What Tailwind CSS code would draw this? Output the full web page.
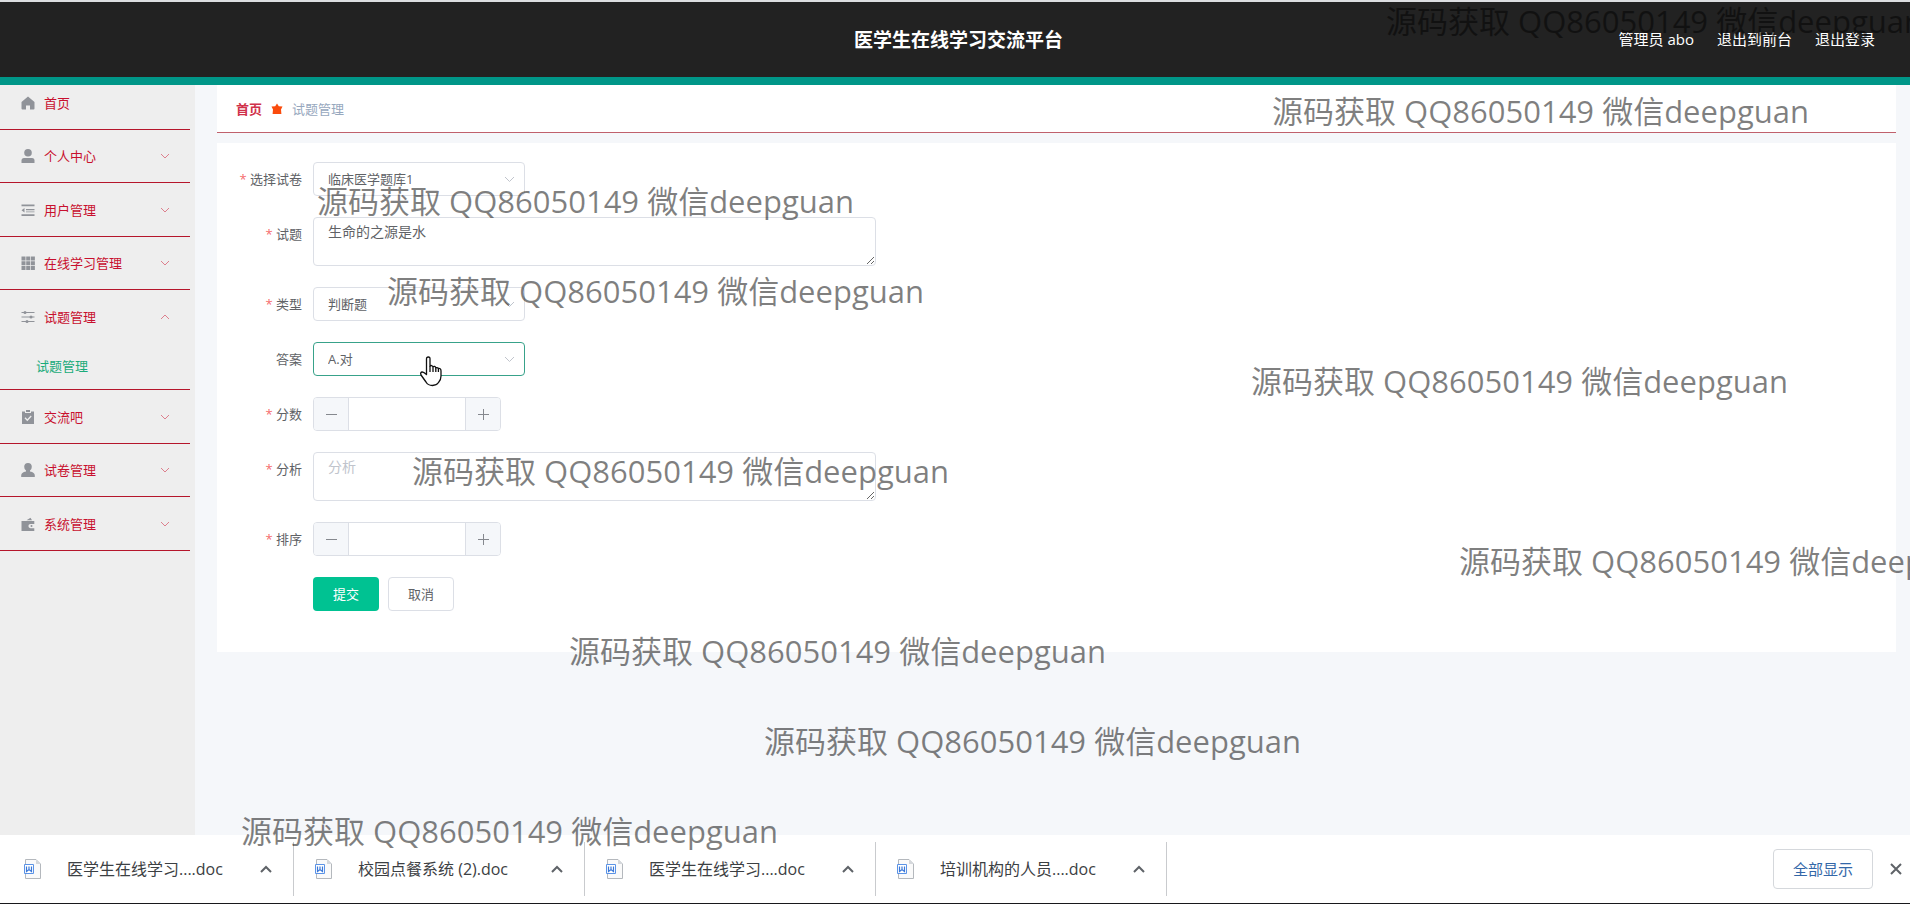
<!DOCTYPE html>
<html lang="zh-CN">
<head>
    <meta charset="UTF-8">
    <meta name="viewport" content="width=device-width, initial-scale=1.0">
    <title>医学生在线学习交流平台</title>
    <script src="https://cdn.jsdelivr.net/npm/@tailwindcss/browser@4"></script>
</head>

<body class="relative flex flex-col min-h-screen overflow-x-hidden bg-[#f5f7fa] text-[13px] leading-5 text-[#606266] font-['Open_Sans','Noto_Sans_CJK_SC',sans-serif]">
    <!-- Header -->
    <header class="grid grid-cols-[1fr_auto_1fr] items-center h-[85px] pl-[42px] pr-[35px] bg-[#222] text-white border-t-2 border-t-[#dcdee1] border-b-8 border-b-[#009688]">
        <span></span>
        <h1 class="text-[19px] leading-6 font-bold">医学生在线学习交流平台</h1>
        <nav class="flex justify-end gap-[23px] pb-px text-[15px]">
            <span>管理员 abo</span>
            <a href="#">退出到前台</a>
            <a href="#">退出登录</a>
        </nav>
    </header>

    <div class="flex flex-1">
        <!-- Sidebar -->
        <aside class="w-[195px] shrink-0 pr-[5px] bg-[#eee]">
            <ul class="text-[#c8102e]">
                <li class="h-[45px] pb-2 border-b border-[#b5152b]">
                    <a href="#" class="flex items-center h-full pl-[21px] pr-5">
                        <svg class="w-[14px] h-[14px] mr-[9px] text-[#909399]" viewBox="0 0 14 14" fill="currentColor"><path d="M7 0.5L0.5 6v6.5q0 1 1 1H5V9.5h4v4h3.500q1 0 1-1V6z"/></svg>
                        首页
                    </a>
                </li>
                <li class="h-[53px] border-b border-[#b5152b]">
                    <a href="#" class="flex items-center h-full pl-[21px] pr-5">
                        <svg class="w-[14px] h-[14px] mr-[9px] text-[#909399]" viewBox="0 0 14 14" fill="currentColor"><circle cx="7" cy="3.800" r="3.800"/><path d="M0.500 14v-2.500q0-2.500 2.500-2.500h8q2.500 0 2.500 2.500V14z"/></svg>
                        个人中心
                        <svg class="w-[10px] h-[6px] ml-auto text-[#dd7f8d]" viewBox="0 0 10 6" fill="none" stroke="currentColor"><path d="M1 1l4 4 4-4"/></svg>
                    </a>
                </li>
                <li class="h-[54px] border-b border-[#b5152b]">
                    <a href="#" class="flex items-center h-full pl-[21px] pr-5">
                        <svg class="w-[14px] h-[14px] mr-[9px] text-[#909399]" viewBox="0 0 14 14" fill="currentColor"><path d="M0.500 1.500h13v1.800h-13zM5 6h8.500v1.300H5zM5 8.500h8.500v.8H5zM0.500 11.200h13V13h-13zM0.500 7.200L3.500 5v4.400z"/></svg>
                        用户管理
                        <svg class="w-[10px] h-[6px] ml-auto text-[#dd7f8d]" viewBox="0 0 10 6" fill="none" stroke="currentColor"><path d="M1 1l4 4 4-4"/></svg>
                    </a>
                </li>
                <li class="h-[53px] border-b border-[#b5152b]">
                    <a href="#" class="flex items-center h-full pl-[21px] pr-5">
                        <svg class="w-[14px] h-[14px] mr-[9px] text-[#909399]" viewBox="0 0 14 14" fill="currentColor"><path d="M.5.5h4v4h-4zM5.200.5h4v4h-4zM9.900.5h4v4h-4zM.5 5.200h4v4h-4zM5.200 5.200h4v4h-4zM9.900 5.200h4v4h-4zM.5 9.900h4v4h-4zM5.200 9.900h4v4h-4zM9.900 9.900h4v4h-4z"/></svg>
                        在线学习管理
                        <svg class="w-[10px] h-[6px] ml-auto text-[#dd7f8d]" viewBox="0 0 10 6" fill="none" stroke="currentColor"><path d="M1 1l4 4 4-4"/></svg>
                    </a>
                </li>
                <li class="border-b border-[#b5152b]">
                    <a href="#" class="flex items-center h-[53px] pl-[21px] pr-5">
                        <svg class="w-[14px] h-[14px] mr-[9px] text-[#909399]" viewBox="0 0 14 14" fill="currentColor"><path d="M.5 2h13v1H.5zM.5 6.500h13v1H.5zM.5 11h13v1H.5z"/><circle cx="4" cy="2.500" r="1.500"/><circle cx="10" cy="7" r="1.500"/><circle cx="6" cy="11.500" r="1.500"/></svg>
                        试题管理
                        <svg class="w-[10px] h-[6px] ml-auto text-[#dd7f8d]" viewBox="0 0 10 6" fill="none" stroke="currentColor"><path d="M1 5l4-4 4 4"/></svg>
                    </a>
                    <a href="#" class="flex items-center h-[46px] pl-9 text-[#1aab7a]">试题管理</a>
                </li>
                <li class="h-[54px] border-b border-[#b5152b]">
                    <a href="#" class="flex items-center h-full pl-[21px] pr-5">
                        <svg class="w-[14px] h-[14px] mr-[9px] text-[#909399]" viewBox="0 0 14 14"><path fill="currentColor" d="M1 1.500h3V3h6V1.500h3V14H1zM5 0h4v2H5z"/><path fill="none" stroke="#eee" stroke-width="1.300" d="M4 7.800l2.300 2.400L10.200 6"/></svg>
                        交流吧
                        <svg class="w-[10px] h-[6px] ml-auto text-[#dd7f8d]" viewBox="0 0 10 6" fill="none" stroke="currentColor"><path d="M1 1l4 4 4-4"/></svg>
                    </a>
                </li>
                <li class="h-[53px] border-b border-[#b5152b]">
                    <a href="#" class="flex items-center h-full pl-[21px] pr-5">
                        <svg class="w-[14px] h-[14px] mr-[9px] text-[#909399]" viewBox="0 0 14 14" fill="currentColor"><path d="M7 0a3.800 3.800 0 0 1 3.800 3.800Q10.800 6.500 9 7.600v.9q4.800.8 4.800 4V14H.2v-1.500q0-3.200 4.800-4v-.9Q3.200 6.500 3.200 3.800A3.800 3.800 0 0 1 7 0z"/></svg>
                        试卷管理
                        <svg class="w-[10px] h-[6px] ml-auto text-[#dd7f8d]" viewBox="0 0 10 6" fill="none" stroke="currentColor"><path d="M1 1l4 4 4-4"/></svg>
                    </a>
                </li>
                <li class="h-[54px] border-b border-[#b5152b]">
                    <a href="#" class="flex items-center h-full pl-[21px] pr-5">
                        <svg class="w-[14px] h-[14px] mr-[9px] text-[#909399]" viewBox="0 0 14 14" fill="currentColor"><path d="M.5 4h12.800v3H9.500a2 2 0 0 0 0 4.200h3.800V14H.5zM5.500 3.200L9.500.8l1.500 2.400z"/><circle cx="10.500" cy="9.100" r="1"/></svg>
                        系统管理
                        <svg class="w-[10px] h-[6px] ml-auto text-[#dd7f8d]" viewBox="0 0 10 6" fill="none" stroke="currentColor"><path d="M1 1l4 4 4-4"/></svg>
                    </a>
                </li>
            </ul>
        </aside>

        <!-- Content -->
        <main class="flex-1 pl-[22px] pr-[14px]">
            <nav class="flex items-center h-12 px-[19px] bg-white border-b border-[#c0606c]">
                <a href="#" class="font-bold text-[#d0314a]">首页</a>
                <svg class="w-3 h-3 mx-[9px]" viewBox="0 0 12 12"><path fill="#fa4b0c" d="M6 .5l1.800 2.700 3.700.3-1.500 3 .4 4.500H1.600L2 6.500l-1.500-3 3.700-.3z"/></svg>
                <span class="text-[#97a8be]">试题管理</span>
            </nav>

            <form class="flex flex-col gap-[21px] mt-[10px] pt-[19px] pb-[41px] pl-5 bg-white">
                <div class="flex">
                    <label for="paper" class="w-[76px] pr-[11px] text-right leading-[34px] whitespace-nowrap"><span class="text-[#f56c6c]">*</span> 选择试卷</label>
                    <div class="relative w-[212px]">
                        <select id="paper" class="appearance-none w-full h-[34px] px-[14px] rounded border border-[#dcdfe6] bg-white">
                            <option>临床医学题库1</option>
                        </select>
                        <svg class="absolute right-[10px] top-[14px] w-[11px] h-[7px] text-[#c0c4cc] pointer-events-none" viewBox="0 0 11 7" fill="none" stroke="currentColor"><path d="M1 1l4.500 4.500L10 1"/></svg>
                    </div>
                </div>

                <div class="flex">
                    <label for="question" class="w-[76px] pr-[11px] text-right leading-[34px] whitespace-nowrap"><span class="text-[#f56c6c]">*</span> 试题</label>
                    <textarea id="question" class="block w-[563px] h-[49px] px-[14px] py-1 text-sm rounded border border-[#dcdfe6] bg-white resize">生命的之源是水</textarea>
                </div>

                <div class="flex">
                    <label for="type" class="w-[76px] pr-[11px] text-right leading-[34px] whitespace-nowrap"><span class="text-[#f56c6c]">*</span> 类型</label>
                    <div class="relative w-[212px]">
                        <select id="type" class="appearance-none w-full h-[34px] px-[14px] rounded border border-[#dcdfe6] bg-white">
                            <option>判断题</option>
                        </select>
                        <svg class="absolute right-[10px] top-[14px] w-[11px] h-[7px] text-[#c0c4cc] pointer-events-none" viewBox="0 0 11 7" fill="none" stroke="currentColor"><path d="M1 1l4.500 4.500L10 1"/></svg>
                    </div>
                </div>

                <div class="flex">
                    <label for="answer" class="w-[76px] pr-[11px] text-right leading-[34px] whitespace-nowrap">答案</label>
                    <div class="relative w-[212px]">
                        <select id="answer" class="appearance-none w-full h-[34px] px-[14px] rounded border border-[#38a28a] bg-white">
                            <option>A.对</option>
                        </select>
                        <svg class="absolute right-[10px] top-[14px] w-[11px] h-[7px] text-[#c0c4cc] pointer-events-none" viewBox="0 0 11 7" fill="none" stroke="currentColor"><path d="M1 1l4.500 4.500L10 1"/></svg>
                        <!-- Hand pointer -->
                        <svg class="absolute left-[107px] top-[14px] w-[22px] h-[31px] pointer-events-none" viewBox="0 0 22 31" fill="#fff" stroke="#111" stroke-width="1.300" stroke-linejoin="round"><path d="M6.500 18.500V3q0-2 1.800-2T10 3v7q1.500-1.300 3 .7 1.700-1 2.800 1 1.800-.5 2.600.7Q21 12 21 15v5q0 4-2.500 6.500-2 3-6 3-4.500 0-6.500-3.500L1 19q-1-2.500 1-3 1.500-.2 4.500 2.500z"/><path fill="none" d="M10 10v6M13 10.700V16M15.800 11.700V16M18.400 12.500V16"/></svg>
                    </div>
                </div>

                <div class="flex">
                    <label for="score" class="w-[76px] pr-[11px] text-right leading-[34px] whitespace-nowrap"><span class="text-[#f56c6c]">*</span> 分数</label>
                    <div class="flex w-[188px] h-[34px] rounded border border-[#dcdfe6] overflow-hidden">
                        <button type="button" aria-label="减少" class="flex items-center justify-center w-[35px] bg-[#f5f7fa] border-r border-[#dcdfe6]">
                            <svg class="w-[11px] h-[11px]" viewBox="0 0 11 11" stroke="#85888e"><path d="M0 5.500h11"/></svg>
                        </button>
                        <input id="score" type="text" class="flex-1 min-w-0 bg-white text-center">
                        <button type="button" aria-label="增加" class="flex items-center justify-center w-[35px] bg-[#f5f7fa] border-l border-[#dcdfe6]">
                            <svg class="w-[11px] h-[11px]" viewBox="0 0 11 11" stroke="#85888e"><path d="M0 5.500h11M5.500 0v11"/></svg>
                        </button>
                    </div>
                </div>

                <div class="flex">
                    <label for="analysis" class="w-[76px] pr-[11px] text-right leading-[34px] whitespace-nowrap"><span class="text-[#f56c6c]">*</span> 分析</label>
                    <textarea id="analysis" placeholder="分析" class="block w-[563px] h-[49px] px-[14px] py-1 text-sm rounded border border-[#dcdfe6] bg-white resize placeholder:text-[#c0c4cc]"></textarea>
                </div>

                <div class="flex">
                    <label for="sort" class="w-[76px] pr-[11px] text-right leading-[34px] whitespace-nowrap"><span class="text-[#f56c6c]">*</span> 排序</label>
                    <div class="flex w-[188px] h-[34px] rounded border border-[#dcdfe6] overflow-hidden">
                        <button type="button" aria-label="减少" class="flex items-center justify-center w-[35px] bg-[#f5f7fa] border-r border-[#dcdfe6]">
                            <svg class="w-[11px] h-[11px]" viewBox="0 0 11 11" stroke="#85888e"><path d="M0 5.500h11"/></svg>
                        </button>
                        <input id="sort" type="text" class="flex-1 min-w-0 bg-white text-center">
                        <button type="button" aria-label="增加" class="flex items-center justify-center w-[35px] bg-[#f5f7fa] border-l border-[#dcdfe6]">
                            <svg class="w-[11px] h-[11px]" viewBox="0 0 11 11" stroke="#85888e"><path d="M0 5.500h11M5.500 0v11"/></svg>
                        </button>
                    </div>
                </div>

                <div class="flex gap-[9px] pl-[76px]">
                    <button type="submit" class="w-[66px] h-[34px] rounded bg-[#00c292] text-white">提交</button>
                    <button type="button" class="w-[66px] h-[34px] rounded border border-[#dcdfe6] bg-white">取消</button>
                </div>
            </form>
        </main>
    </div>

    <!-- Download bar -->
    <footer class="flex items-center h-[69px] pl-[3px] pr-2 bg-white border-b border-[#18181c] text-base text-[#3c4043]">
        <div class="flex items-center w-[291px] h-[54px] px-[21px] border-r border-[#c9cbce]">
            <svg class="w-[17px] h-5 mr-[26px] shrink-0" viewBox="0 0 17 20" fill="none"><path fill="#fafafa" stroke="#b4b8bd" d="M1.500.5H12L16.500 5v14.500h-15z"/><path fill="#d5d8dc" d="M12 .5V5h4.500z"/><path fill="#fff" stroke="#5b93e6" d="M.5 5.500h9v9h-9z"/><path stroke="#3b78d8" stroke-width="1.200" d="M2.500 7.500v5l2.500-2 2.500 2v-5M5 7.500v3"/></svg>
            <a href="#">医学生在线学习....doc</a>
            <button type="button" aria-label="选项" class="ml-auto"><svg class="w-3 h-2" viewBox="0 0 12 8" fill="none" stroke="#5f6368" stroke-width="2"><path d="M1 7l5-5 5 5"/></svg></button>
        </div>
        <div class="flex items-center w-[291px] h-[54px] px-[21px] border-r border-[#c9cbce]">
            <svg class="w-[17px] h-5 mr-[26px] shrink-0" viewBox="0 0 17 20" fill="none"><path fill="#fafafa" stroke="#b4b8bd" d="M1.500.5H12L16.500 5v14.500h-15z"/><path fill="#d5d8dc" d="M12 .5V5h4.500z"/><path fill="#fff" stroke="#5b93e6" d="M.5 5.500h9v9h-9z"/><path stroke="#3b78d8" stroke-width="1.200" d="M2.500 7.500v5l2.500-2 2.500 2v-5M5 7.500v3"/></svg>
            <a href="#">校园点餐系统 (2).doc</a>
            <button type="button" aria-label="选项" class="ml-auto"><svg class="w-3 h-2" viewBox="0 0 12 8" fill="none" stroke="#5f6368" stroke-width="2"><path d="M1 7l5-5 5 5"/></svg></button>
        </div>
        <div class="flex items-center w-[291px] h-[54px] px-[21px] border-r border-[#c9cbce]">
            <svg class="w-[17px] h-5 mr-[26px] shrink-0" viewBox="0 0 17 20" fill="none"><path fill="#fafafa" stroke="#b4b8bd" d="M1.500.5H12L16.500 5v14.500h-15z"/><path fill="#d5d8dc" d="M12 .5V5h4.500z"/><path fill="#fff" stroke="#5b93e6" d="M.5 5.500h9v9h-9z"/><path stroke="#3b78d8" stroke-width="1.200" d="M2.500 7.500v5l2.500-2 2.500 2v-5M5 7.500v3"/></svg>
            <a href="#">医学生在线学习....doc</a>
            <button type="button" aria-label="选项" class="ml-auto"><svg class="w-3 h-2" viewBox="0 0 12 8" fill="none" stroke="#5f6368" stroke-width="2"><path d="M1 7l5-5 5 5"/></svg></button>
        </div>
        <div class="flex items-center w-[291px] h-[54px] px-[21px] border-r border-[#c9cbce]">
            <svg class="w-[17px] h-5 mr-[26px] shrink-0" viewBox="0 0 17 20" fill="none"><path fill="#fafafa" stroke="#b4b8bd" d="M1.500.5H12L16.500 5v14.500h-15z"/><path fill="#d5d8dc" d="M12 .5V5h4.500z"/><path fill="#fff" stroke="#5b93e6" d="M.5 5.500h9v9h-9z"/><path stroke="#3b78d8" stroke-width="1.200" d="M2.500 7.500v5l2.500-2 2.500 2v-5M5 7.500v3"/></svg>
            <a href="#">培训机构的人员....doc</a>
            <button type="button" aria-label="选项" class="ml-auto"><svg class="w-3 h-2" viewBox="0 0 12 8" fill="none" stroke="#5f6368" stroke-width="2"><path d="M1 7l5-5 5 5"/></svg></button>
        </div>
        <button type="button" class="ml-auto w-[100px] h-10 rounded border border-[#d5d8dc] text-[15px] text-[#3367a8]">全部显示</button>
        <button type="button" aria-label="关闭" class="ml-[17px]"><svg class="w-3 h-3" viewBox="0 0 12 12" stroke="#5f6368" stroke-width="2"><path d="M1 1l10 10M11 1L1 11"/></svg></button>
    </footer>

    <!-- Watermarks -->
    <div class="absolute inset-0 overflow-hidden pointer-events-none text-[31px] leading-10 text-black/50 whitespace-nowrap">
        <span class="absolute left-[1386px] top-[1px]">源码获取 QQ86050149 微信deepguan</span>
        <span class="absolute left-[1272px] top-[91px]">源码获取 QQ86050149 微信deepguan</span>
        <span class="absolute left-[317px] top-[181px]">源码获取 QQ86050149 微信deepguan</span>
        <span class="absolute left-[387px] top-[271px]">源码获取 QQ86050149 微信deepguan</span>
        <span class="absolute left-[1251px] top-[361px]">源码获取 QQ86050149 微信deepguan</span>
        <span class="absolute left-[412px] top-[451px]">源码获取 QQ86050149 微信deepguan</span>
        <span class="absolute left-[1459px] top-[541px]">源码获取 QQ86050149 微信deepguan</span>
        <span class="absolute left-[569px] top-[631px]">源码获取 QQ86050149 微信deepguan</span>
        <span class="absolute left-[764px] top-[721px]">源码获取 QQ86050149 微信deepguan</span>
        <span class="absolute left-[241px] top-[811px]">源码获取 QQ86050149 微信deepguan</span>
    </div>
</body>
</html>
